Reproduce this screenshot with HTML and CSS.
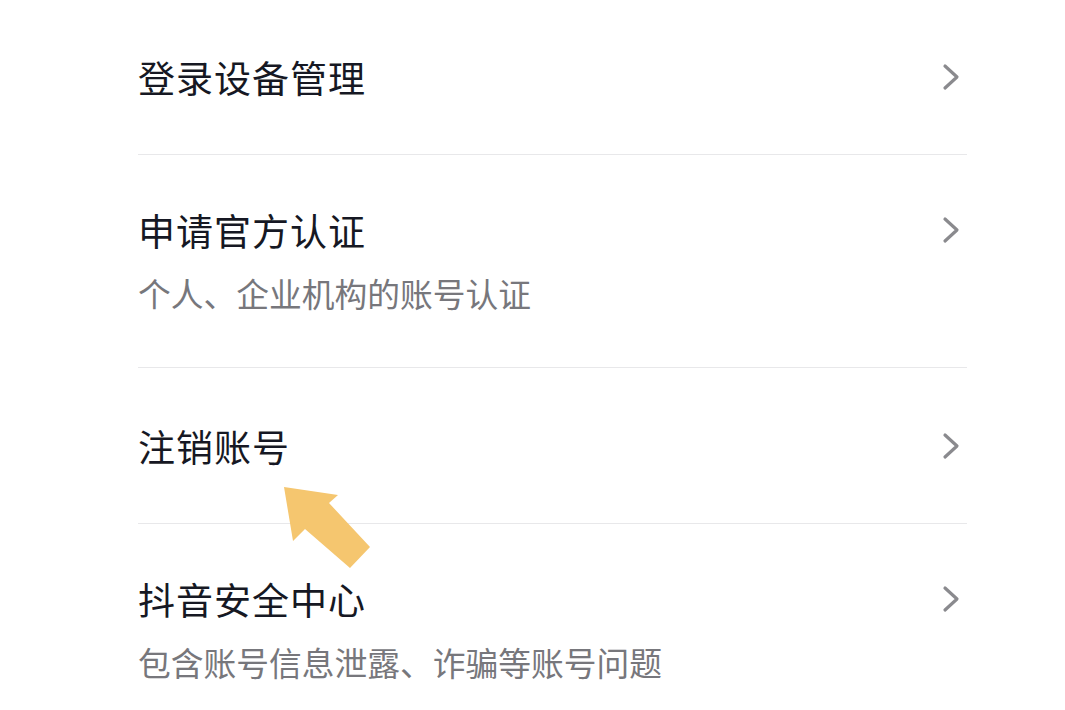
FILE: index.html
```html
<!DOCTYPE html>
<html lang="zh-CN">
<head>
  <meta charset="UTF-8">
  <meta name="viewport" content="width=device-width, initial-scale=1.0">
  <title>账号与安全</title>
  <link rel="stylesheet" href="styles.css">
</head>
<body>
  <ul class="menu">
    <li class="item item-first">
      <div class="item-head">
        <span class="item-title">登录设备管理</span>
        <svg class="chevron" viewBox="0 0 18 28"><path d="M3 3 L15 14 L3 25"/></svg>
      </div>
    </li>
    <li class="item item-tall">
      <div class="item-head">
        <span class="item-title">申请官方认证</span>
        <svg class="chevron" viewBox="0 0 18 28"><path d="M3 3 L15 14 L3 25"/></svg>
      </div>
      <p class="item-sub">个人、企业机构的账号认证</p>
    </li>
    <li class="item">
      <div class="item-head">
        <span class="item-title">注销账号</span>
        <svg class="chevron" viewBox="0 0 18 28"><path d="M3 3 L15 14 L3 25"/></svg>
      </div>
    </li>
    <li class="item item-tall item-last">
      <div class="item-head">
        <span class="item-title">抖音安全中心</span>
        <svg class="chevron" viewBox="0 0 18 28"><path d="M3 3 L15 14 L3 25"/></svg>
      </div>
      <p class="item-sub">包含账号信息泄露、诈骗等账号问题</p>
    </li>
  </ul>

  <!-- 指向“注销账号”的提示箭头 -->
  <svg class="pointer" viewBox="0 0 100 90">
    <polygon points="0,0 54,8 45,16 86,60 66,81 21,42 9,54"/>
  </svg>
</body>
</html>
```

FILE: styles.css
```css
body {
  margin: 0;
  background-color: #fff;
  font-family: "Noto Sans CJK SC", "Noto Sans", sans-serif;
  color: #161823;
  overflow: hidden;
}

.menu {
  list-style: none;
  margin: 0 98px 0 138px;
  padding: 0;
}

.item {
  display: flex;
  flex-direction: column;
  justify-content: center;
  height: 156px;
  border-bottom: 1px solid #e8e8ea;
  box-sizing: border-box;
}

.item-first {
  height: 155px;
}

.item-tall {
  height: 213px;
  padding-bottom: 2px;
}

.item-last {
  border-bottom: none;
}

.item-head {
  display: flex;
  justify-content: space-between;
  align-items: center;
  height: 44px;
}

.item-title {
  font-size: 37px;
  line-height: 44px;
  letter-spacing: 1px;
}

.chevron {
  width: 18px;
  height: 28px;
  margin-right: 7px;
  fill: none;
  stroke: #8a8a8e;
  stroke-width: 3.2;
  stroke-linecap: round;
  stroke-linejoin: round;
}

.item-sub {
  margin: 21px 0 0;
  font-size: 32.75px;
  line-height: 40px;
  color: #77777c;
}

.pointer {
  position: absolute;
  left: 284px;
  top: 487px;
  width: 100px;
  height: 90px;
  fill: #f5c66f;
}
```
